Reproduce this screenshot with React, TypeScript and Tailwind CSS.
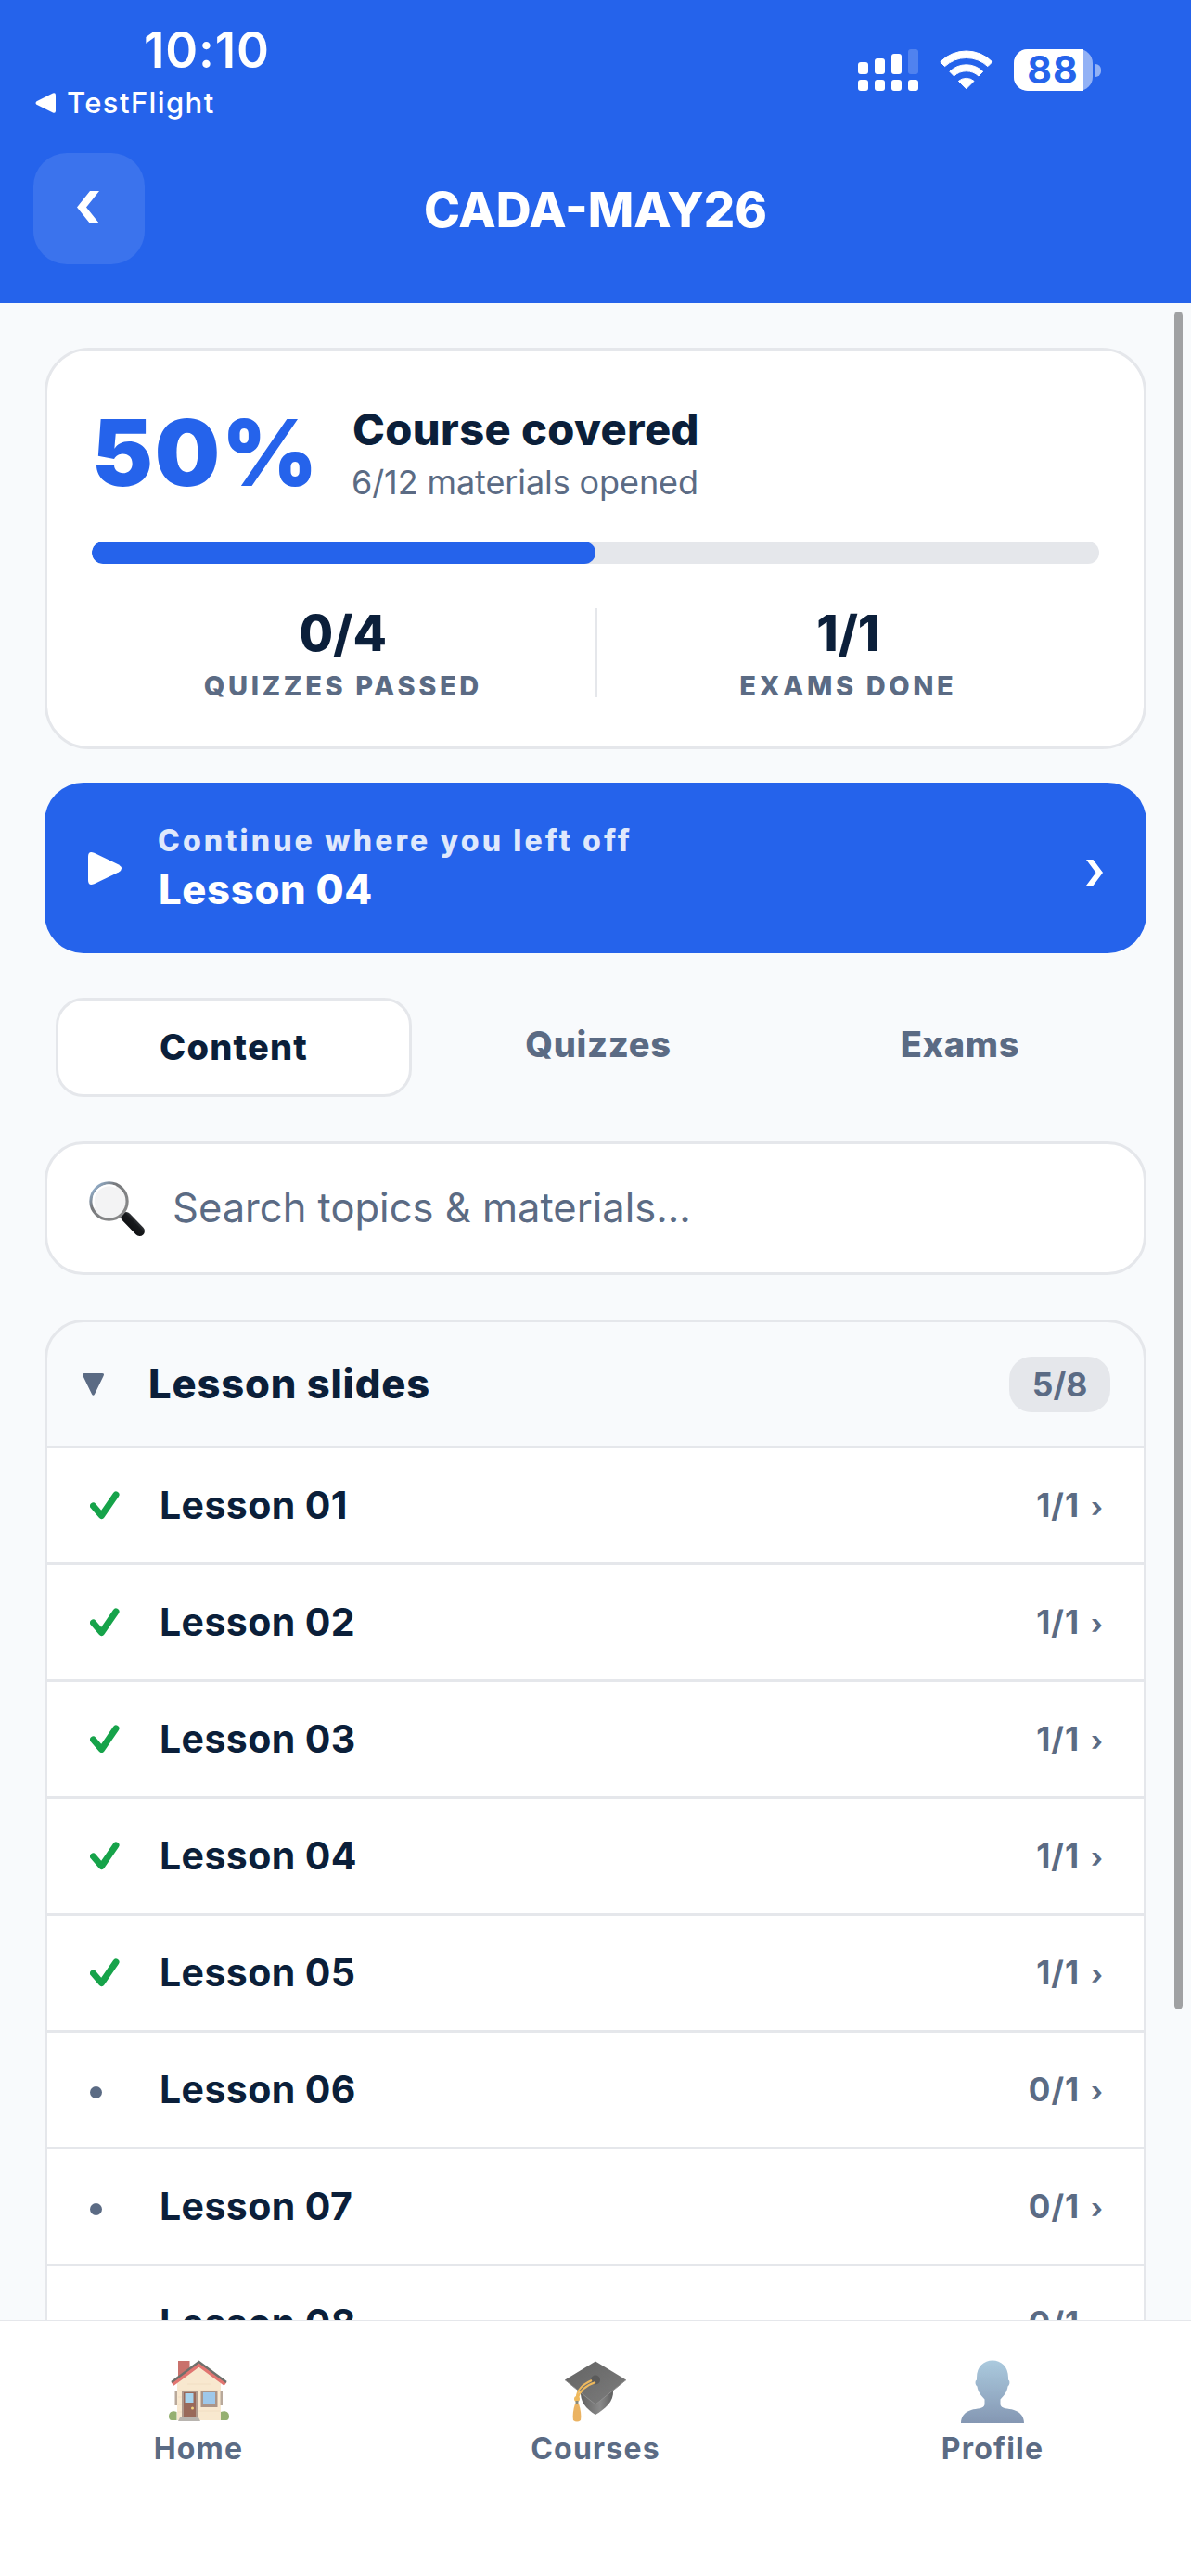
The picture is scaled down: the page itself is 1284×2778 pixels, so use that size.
import type { ReactNode } from "react"

interface Lesson {
  title: string
  opened: boolean
}

const lessons: Lesson[] = [
  { title: "Lesson 01", opened: true },
  { title: "Lesson 02", opened: true },
  { title: "Lesson 03", opened: true },
  { title: "Lesson 04", opened: true },
  { title: "Lesson 05", opened: true },
  { title: "Lesson 06", opened: false },
  { title: "Lesson 07", opened: false },
  { title: "Lesson 08", opened: false },
]

function SignalIcon() {
  return (
    <svg width="66" height="45" viewBox="0 0 66 45" fill="white">
      <rect x="0" y="14" width="11" height="13" rx="3" />
      <rect x="18" y="10" width="11" height="17" rx="3" />
      <rect x="36" y="5" width="11" height="22" rx="3" />
      <rect x="54" y="0" width="11" height="27" rx="3" opacity="0.2" />
      <rect x="0" y="33" width="11" height="12" rx="3" />
      <rect x="18" y="33" width="11" height="12" rx="3" />
      <rect x="36" y="33" width="11" height="12" rx="3" />
      <rect x="54" y="33" width="11" height="12" rx="3" />
    </svg>
  )
}

function WifiIcon() {
  return (
    <svg width="58" height="43" viewBox="0 0 58 43" fill="white" stroke="white" strokeWidth="1" strokeLinejoin="round">
      <path d="M0.8 12.8A39 39 0 0 1 56.7 12.8L51.9 17.6A34 34 0 0 0 5.6 17.6Z" />
      <path d="M10.8 23.2A25.5 25.5 0 0 1 46.7 23.2L42 28A19.5 19.5 0 0 0 15.5 28Z" />
      <path d="M20.4 33.4A13 13 0 0 1 37 33.4L28.7 41.8Z" />
    </svg>
  )
}

function BatteryIcon() {
  return (
    <div className="flex items-center gap-[3px]">
      <div className="flex h-[45px] w-[85px] items-center rounded-[15px] bg-[#92b1f5]">
        <div className="flex h-full w-[75px] items-center justify-center rounded-l-[15px] bg-white">
          <span className="pl-[9px] text-[41px] leading-[45px] font-bold tracking-[1px] text-[#2563eb]">88</span>
        </div>
      </div>
      <div className="h-[14px] w-[6px] rounded-r-full bg-[#92b1f5]" />
    </div>
  )
}

function SearchIcon() {
  return (
    <svg width="60" height="59" viewBox="0 0 60 59" fill="none">
      <defs>
        <linearGradient id="handle" x1="0" y1="1" x2="1" y2="0">
          <stop offset="0" stopColor="#0b0c0e" />
          <stop offset="0.6" stopColor="#17191c" />
          <stop offset="1" stopColor="#5c6066" />
        </linearGradient>
        <linearGradient id="rim" x1="0" y1="0" x2="1" y2="1">
          <stop offset="0" stopColor="#9cc3ea" />
          <stop offset="0.35" stopColor="#77797c" />
          <stop offset="1" stopColor="#8d8d8d" />
        </linearGradient>
      </defs>
      <path d="M34 37L40 42" stroke="#77797c" strokeWidth="4" />
      <path d="M40 38.5L54.5 53.5" stroke="url(#handle)" strokeWidth="11" strokeLinecap="round" />
      <circle cx="21.5" cy="21.5" r="19.6" fill="#f3f3f4" stroke="url(#rim)" strokeWidth="3.2" />
      <path d="M6 28A17 17 0 0 1 29 6" stroke="white" strokeWidth="2" />
    </svg>
  )
}

function HomeIcon() {
  return (
    <svg width="65" height="68" viewBox="0 0 65 68">
      <path d="M10 1H22.5V10L10 21Z" fill="#c9716c" />
      <path d="M9 23L32.5 5L56 23V65H9Z" fill="#f8e8cf" />
      <path d="M10 33H55M10 40H14M10 48H14M10 56H14M31 55H55M20 26H46" stroke="#efdcc0" strokeWidth="0.8" />
      <path d="M6.5 33H9V49H6.5ZM55.5 33H58V49H55.5Z" fill="#b9a99b" />
      <path d="M4 26L32.5 5L61 26" fill="none" stroke="#e27571" strokeWidth="4.6" />
      <path d="M3 24L32.5 2L62 24" fill="none" stroke="#6f706c" strokeWidth="2.4" />
      <rect x="14" y="33" width="17" height="29" fill="#b09a8d" />
      <rect x="16" y="35" width="13" height="27" fill="#99695a" />
      <rect x="17.5" y="36" width="9" height="10" fill="#a7d4ee" />
      <circle cx="25.5" cy="52" r="1.5" fill="#f3d27c" />
      <rect x="34.5" y="33" width="18" height="18" fill="#ab9588" />
      <rect x="37" y="35" width="13" height="13" fill="#9ec8ea" />
      <path d="M0 61C0 56 4 54 8.5 56V65H3C1 65 0 63 0 61Z" fill="#95b071" />
      <path d="M65 61C65 56 61 54 56 56V65H62C64 65 65 63 65 61Z" fill="#95b071" />
      <path d="M12 62H32L34 66H10Z" fill="#b8b4af" />
    </svg>
  )
}

function CoursesIcon() {
  return (
    <svg width="67" height="68" viewBox="0 0 67 68">
      <defs>
        <linearGradient id="board" x1="0" y1="0" x2="1" y2="1">
          <stop offset="0" stopColor="#636363" />
          <stop offset="1" stopColor="#7d7d7d" />
        </linearGradient>
        <linearGradient id="skull" x1="0" y1="0" x2="1" y2="0">
          <stop offset="0" stopColor="#606060" />
          <stop offset="0.6" stopColor="#8a8a8a" />
          <stop offset="1" stopColor="#5f5f5f" />
        </linearGradient>
      </defs>
      <path d="M17 33C16 45 23 53 33 59C43 53 53 45 52 33Z" fill="url(#skull)" />
      <path d="M33 1.5L66 21.5L33 48L0 21.5Z" fill="url(#board)" />
      <path d="M0 21.5L33 48L66 21.5" fill="none" stroke="#8f8f8f" strokeWidth="1" />
      <circle cx="33" cy="21.5" r="5" fill="#5a5a5a" />
      <path d="M29 22C20 26 13 31 12.5 42M33 24C24 27 16 33 13.5 42" fill="none" stroke="#eeb95d" strokeWidth="2" />
      <circle cx="13" cy="42" r="3" fill="#eeb95d" />
      <rect x="11.5" y="44" width="3" height="4" fill="#8a8a7a" />
      <path d="M11 47H15C17 54 18 60 17 65Q13 68 9 65C8 60 9 54 11 47Z" fill="#ebb362" />
    </svg>
  )
}

function ProfileIcon() {
  return (
    <svg width="68" height="68" viewBox="0 0 68 68">
      <defs>
        <linearGradient id="bust" x1="0" y1="0" x2="0" y2="1">
          <stop offset="0" stopColor="#abcade" />
          <stop offset="1" stopColor="#8497b3" />
        </linearGradient>
      </defs>
      <path
        d="M34 0.5C43 0.5 51 7 51 19V21.5C53 22 53 27 50.5 28.5C50 34 46 39 42.5 42.5V48C43 53 51 52 57 54C64 56 68 61 68 68H0C0 61 4 56 11 54C17 52 25 53 25.5 48V42.5C22 39 18 34 17.5 28.5C15 27 15 22 17 21.5V19C17 7 25 0.5 34 0.5Z"
        fill="url(#bust)"
      />
    </svg>
  )
}

function StatusBar() {
  return (
    <div className="flex h-[165px] justify-between">
      <div className="flex flex-col pt-6">
        <span className="pl-[155px] text-[53px] leading-[60px] font-semibold tracking-[0.8px]">10:10</span>
        <div className="mt-[6px] flex items-center gap-3 pl-[38px]">
          <svg width="22" height="22" viewBox="0 0 22 22" fill="white">
            <path d="M1.5 9.2L19 0.5Q22 -0.5 22 2.5V19.5Q22 22.5 19 21.5L1.5 12.8Q-0.5 11 1.5 9.2Z" />
          </svg>
          <span className="text-[31px] leading-[42px] font-medium tracking-[1.4px]">TestFlight</span>
        </div>
      </div>
      <div className="mt-[53px] mr-[97px] flex h-[45px] items-center gap-[22px]">
        <SignalIcon />
        <WifiIcon />
        <BatteryIcon />
      </div>
    </div>
  )
}

function Header() {
  return (
    <header className="h-[327px] shrink-0 bg-[#2563eb] text-white">
      <StatusBar />
      <div className="flex h-[120px] items-center px-9">
        <button className="flex h-[120px] w-[120px] items-center justify-center rounded-[36px] bg-[#3b73ed] pr-[2px] pb-[3px]">
          <svg width="24" height="35" viewBox="0 0 24 35" fill="white">
            <path d="M14 0H24L10 17.5L24 35H14L0 17.5Z" />
          </svg>
        </button>
        <h1 className="flex-1 pt-[2px] text-center text-[52.5px] leading-[60px] font-extrabold">CADA-MAY26</h1>
        <div className="w-[120px]" />
      </div>
    </header>
  )
}

function Stat({ value, label }: { value: string; label: string }) {
  return (
    <div className="flex flex-1 flex-col items-center">
      <span className="text-[53px] leading-[54px] font-extrabold">{value}</span>
      <span className="mt-[17px] text-[29px] leading-[25px] font-extrabold tracking-[3.6px] text-[#5b6b84]">{label}</span>
    </div>
  )
}

function ProgressCard() {
  return (
    <section className="rounded-[48px] border-[3px] border-[#e5e7eb] bg-white px-12 pt-12 pb-[53px]">
      <div className="flex h-[124px] items-center">
        <span className="w-[281px] text-[99px] leading-[124px] font-black tracking-[1.8px] text-[#2563eb]">50%</span>
        <div>
          <div className="text-[47px] leading-[58px] font-extrabold tracking-[0.4px]">Course covered</div>
          <div className="mt-[6px] -ml-px text-[36px] leading-[44px] tracking-[-0.1px] text-[#5b6b84]">6/12 materials opened</div>
        </div>
      </div>
      <div className="mt-[34px] h-6 overflow-hidden rounded-full bg-[#e5e7eb]">
        <div className="h-full w-1/2 rounded-full bg-[#2563eb]" />
      </div>
      <div className="mt-12 flex h-24">
        <Stat value="0/4" label="QUIZZES PASSED" />
        <div className="w-[3px] bg-[#e5e7eb]" />
        <Stat value="1/1" label="EXAMS DONE" />
      </div>
    </section>
  )
}

function ContinueCard() {
  return (
    <section className="mt-9 flex h-[184px] items-center rounded-[42px] bg-[#2563eb] px-[47px] text-white">
      <svg width="36" height="35" viewBox="0 0 36 35" fill="white">
        <path d="M0 5Q0 -2 6.5 0.8L33 13.5Q39 17.5 33 21.5L6.5 34.2Q0 37 0 30Z" />
      </svg>
      <div className="ml-10 flex-1">
        <div className="-ml-px text-[32px] leading-[46px] font-extrabold tracking-[3.1px] text-[#dfe8fc]">Continue where you left off</div>
        <div className="text-[43.5px] leading-[58px] font-extrabold tracking-[0.7px]">Lesson 04</div>
      </div>
      <svg className="mt-[10px]" width="18" height="28" viewBox="0 0 18 28" fill="white">
        <path d="M0 0H7.5L18 14L7.5 28H0L10.5 14Z" />
      </svg>
    </section>
  )
}

function Tabs() {
  return (
    <div className="mt-12 flex items-start gap-3 px-3 text-center text-[38px] leading-[101px] font-extrabold tracking-[0.7px] text-[#5b6b84]">
      <div className="w-[384px] rounded-[30px] border-[3px] border-[#e5e7eb] bg-white tracking-[1.2px] text-[#0b1f3a]">Content</div>
      <div className="flex-1">Quizzes</div>
      <div className="flex-1">Exams</div>
    </div>
  )
}

function SearchBox() {
  return (
    <div className="mt-12 flex h-36 items-center rounded-[42px] border-[3px] border-[#e5e7eb] bg-white pl-[45px]">
      <SearchIcon />
      <span className="ml-[30px] text-[43.5px] text-[#5b6b84]">Search topics &amp; materials...</span>
    </div>
  )
}

function LessonRow({ lesson }: { lesson: Lesson }) {
  return (
    <li className="flex h-[126px] items-center border-t-[3px] border-[#e5e7eb] bg-white pr-[44px] pl-[46px]">
      <div className="w-[75px]">
        {lesson.opened ? (
          <svg width="32" height="31" viewBox="0 0 32 31" fill="none">
            <path d="M3.5 16L12.5 26.5L28 4" stroke="#16a34a" strokeWidth="7" strokeLinecap="round" strokeLinejoin="round" />
          </svg>
        ) : (
          <div className="mt-[5px] h-[13px] w-[13px] rounded-full bg-[#5b6b84]" />
        )}
      </div>
      <span className="flex-1 text-[41px] font-bold tracking-[0.4px]">{lesson.title}</span>
      <div className="flex items-baseline gap-[12px] font-bold text-[#5b6b84]">
        <span className="text-[35px] tracking-[1px]">{lesson.opened ? "1/1" : "0/1"}</span>
        <span className="text-[30px]">›</span>
      </div>
    </li>
  )
}

function LessonSection() {
  return (
    <section className="mt-12 overflow-hidden rounded-[42px] border-[3px] border-[#e5e7eb]">
      <div className="flex h-[133px] items-center pr-9 pl-[38px]">
        <svg width="23" height="24" viewBox="0 0 23 24" fill="#5b6b84">
          <path d="M2 0H21Q24 0 22.5 3L13 22.5Q11.5 25 10 22.5L0.5 3Q-1 0 2 0Z" />
        </svg>
        <h2 className="ml-12 flex-1 text-[43.5px] font-extrabold tracking-[0.85px]">Lesson slides</h2>
        <span className="flex h-[60px] w-[109px] items-center justify-center rounded-[24px] bg-[#e5e7eb] pt-[2px] text-[35.5px] font-bold text-[#5b6b84]">
          5/8
        </span>
      </div>
      <ul>
        {lessons.map((lesson) => (
          <LessonRow key={lesson.title} lesson={lesson} />
        ))}
      </ul>
    </section>
  )
}

function NavItem({ icon, label }: { icon: ReactNode; label: string }) {
  return (
    <div className="flex flex-1 flex-col items-center pt-[42px]">
      {icon}
      <span className="mt-2 text-[32px] leading-[40px] font-bold tracking-[1.2px]">{label}</span>
    </div>
  )
}

export default function App() {
  return (
    <div className="relative flex h-[2778px] w-[1284px] flex-col overflow-hidden bg-[#f8fafc] font-['Inter',sans-serif] text-[#0b1f3a]">
      <Header />
      <main className="min-h-0 flex-1 overflow-hidden px-12 pt-12">
        <ProgressCard />
        <ContinueCard />
        <Tabs />
        <SearchBox />
        <LessonSection />
      </main>
      <nav className="flex h-[276px] shrink-0 border-t border-[#e5e7eb] bg-white text-[#5b6b84]">
        <NavItem icon={<HomeIcon />} label="Home" />
        <NavItem icon={<CoursesIcon />} label="Courses" />
        <NavItem icon={<ProfileIcon />} label="Profile" />
      </nav>
      {/* scroll indicator */}
      <div className="absolute top-[336px] right-[9px] h-[1831px] w-[9px] rounded-full bg-[#a0a1a3]" />
    </div>
  )
}
